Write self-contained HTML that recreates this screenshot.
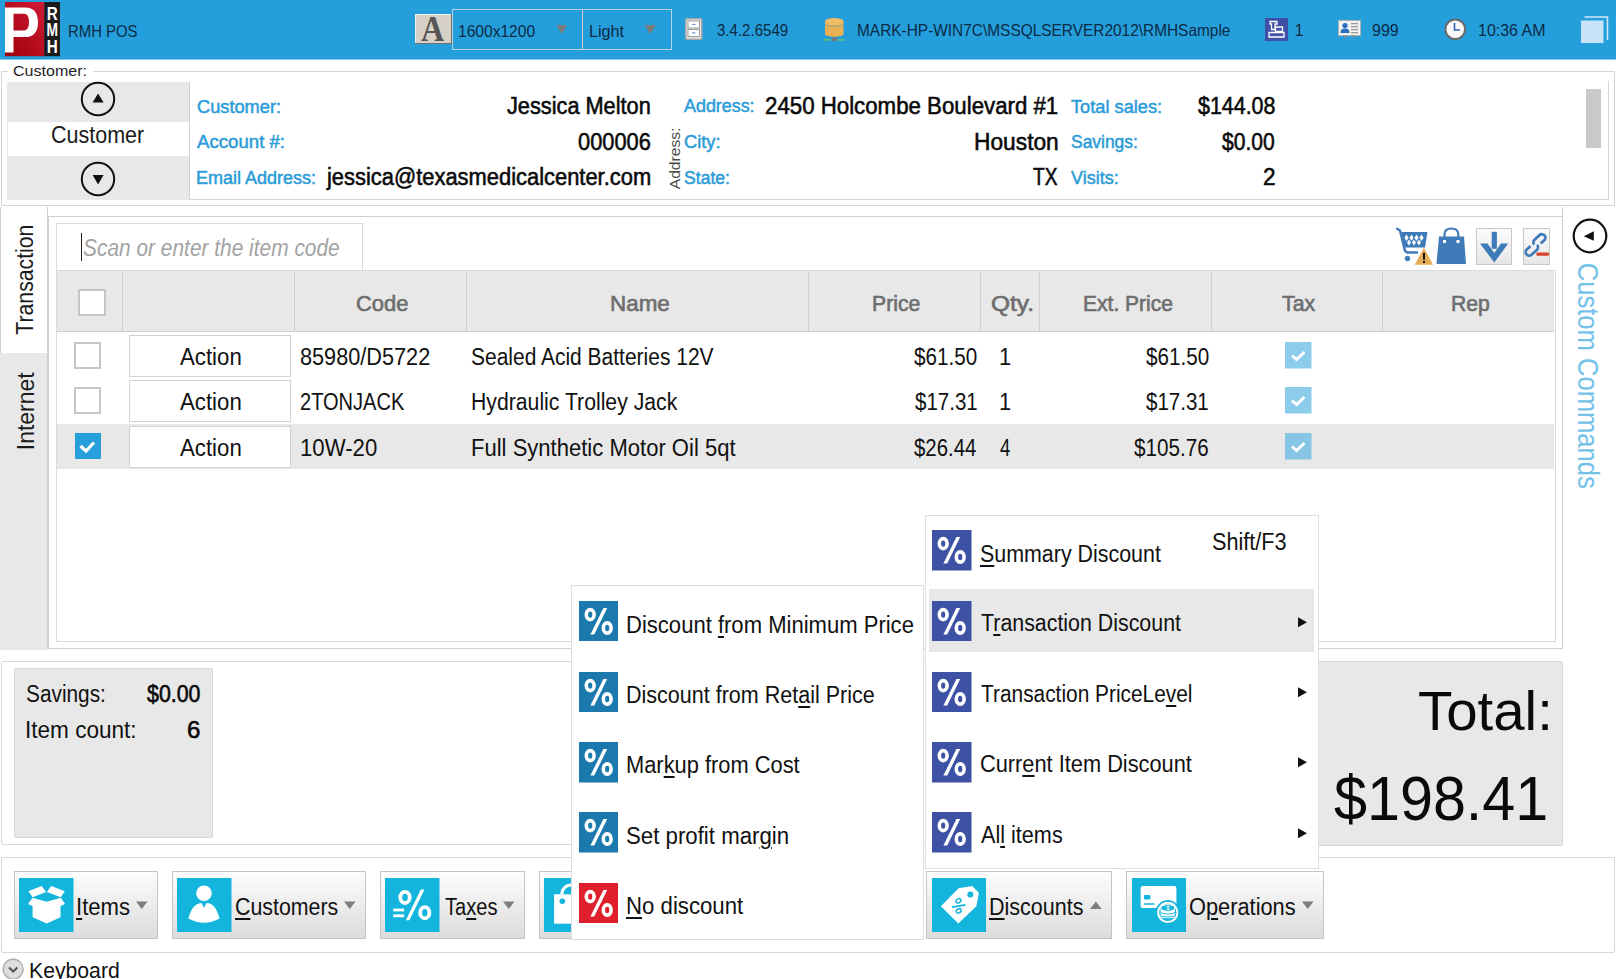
<!DOCTYPE html>
<html><head><meta charset="utf-8"><title>RMH POS</title>
<style>
html,body{margin:0;padding:0;width:1616px;height:979px;overflow:hidden;background:#fff;position:relative;font-family:'Liberation Sans', sans-serif;}
u{text-decoration:underline;text-decoration-thickness:1.6px;text-underline-offset:2.5px;}
</style></head><body>
<div style="position:absolute;left:0px;top:0px;width:1616px;height:59px;background:#259fdb"></div>
<div style="position:absolute;left:0px;top:59px;width:1616px;height:1px;background:#86c9ec"></div>
<svg style="position:absolute;left:5px;top:2px;" width="55" height="55" viewBox="0 0 55 55">
<defs><linearGradient id="lg" x1="1" y1="0" x2="0" y2="1"><stop offset="0" stop-color="#d21a36"/><stop offset="1" stop-color="#9c0008"/></linearGradient></defs>
<rect x="0" y="0" width="39.5" height="54.2" fill="url(#lg)"/>
<rect x="39.2" y="0" width="15.8" height="54.2" fill="#1c1c1c"/>
<path d="M0 5.4 H20 C29 5.4 33 10.5 33 20.7 C33 30.5 28 35.1 20 35.1 H8.5 V50.5 H0 Z M8.5 11.8 V28.4 H19 C22.5 28.4 24 25 24 20.1 C24 15 22.5 11.8 19 11.8 Z" fill="#fff" fill-rule="evenodd"/>
<text x="41.7" y="17.5" font-family="Liberation Sans" font-weight="700" font-size="18" fill="#fff" textLength="11" lengthAdjust="spacingAndGlyphs">R</text>
<text x="41.5" y="33.8" font-family="Liberation Sans" font-weight="700" font-size="18" fill="#fff" textLength="11.5" lengthAdjust="spacingAndGlyphs">M</text>
<text x="41.7" y="50.7" font-family="Liberation Sans" font-weight="700" font-size="18" fill="#fff" textLength="11" lengthAdjust="spacingAndGlyphs">H</text>
</svg>
<div style="position:absolute;top:22px;font-family:'Liberation Sans', sans-serif;font-size:16.5px;line-height:18px;font-weight:400;font-style:normal;color:#0c2a44;white-space:pre;transform-origin:0 0;left:67.60px;transform:scaleX(0.9013);">RMH POS</div>
<div style="position:absolute;left:415px;top:14.3px;width:36.5px;height:30px;background:#d6d0c6;box-shadow:inset -1px -1px 0 #6e6e6e, inset 1px 1px 0 #f4f2ee;"></div>
<svg style="position:absolute;left:415px;top:14px;" width="37" height="31" viewBox="0 0 37 31"><text x="6" y="26.6" font-family="Liberation Serif" font-weight="700" font-size="35" fill="#555" textLength="23.3" lengthAdjust="spacingAndGlyphs">A</text></svg>
<div style="position:absolute;left:452px;top:9px;width:218px;height:39px;border:1px solid #b9d3e2;box-sizing:content-box;"></div>
<div style="position:absolute;left:582px;top:10px;width:1px;height:39px;background:#d4cbc4"></div>
<div style="position:absolute;top:22px;font-family:'Liberation Sans', sans-serif;font-size:16.5px;line-height:18px;font-weight:400;font-style:normal;color:#0c2a44;white-space:pre;transform-origin:0 0;left:457.56px;transform:scaleX(0.9443);">1600x1200</div>
<svg style="position:absolute;left:556px;top:25px;" width="12" height="10" viewBox="0 0 12 10"><polygon points="0.5,0 11,0 5.75,9" fill="#7a7a7a"/></svg>
<div style="position:absolute;top:22px;font-family:'Liberation Sans', sans-serif;font-size:16.5px;line-height:18px;font-weight:400;font-style:normal;color:#0c2a44;white-space:pre;transform-origin:0 0;left:588.52px;transform:scaleX(0.9802);">Light</div>
<svg style="position:absolute;left:644px;top:25px;" width="13" height="10" viewBox="0 0 13 10"><polygon points="0.5,0 12,0 6.25,9" fill="#7a7a7a"/></svg>
<svg style="position:absolute;left:685px;top:18px;" width="18" height="22" viewBox="0 0 18 22"><rect x="0.75" y="0.75" width="16" height="20.5" rx="1.5" fill="#e6e6e6" stroke="#a8a8a8" stroke-width="1.5"/>
<rect x="3" y="3" width="11.5" height="7" fill="#fff" stroke="#888" stroke-width="0.8"/>
<rect x="3" y="11.5" width="11.5" height="7" fill="#fff" stroke="#888" stroke-width="0.8"/>
<path d="M6.5 6.8 Q8.75 4.8 11 6.8 Z" fill="#3a6fc0"/><path d="M6.5 15.3 Q8.75 13.3 11 15.3 Z" fill="#3a6fc0"/></svg>
<div style="position:absolute;top:21px;font-family:'Liberation Sans', sans-serif;font-size:16.5px;line-height:18px;font-weight:400;font-style:normal;color:#0c2a44;white-space:pre;transform-origin:0 0;left:717.00px;transform:scaleX(0.9125);">3.4.2.6549</div>
<svg style="position:absolute;left:824px;top:17px;" width="21" height="26" viewBox="0 0 21 26"><path d="M1 4.5 V16.8 C1 18.6 5 19.8 10.3 19.8 C15.6 19.8 19.5 18.6 19.5 16.8 V4.5 Z" fill="#eab054"/>
<ellipse cx="10.25" cy="4.5" rx="9.25" ry="3.4" fill="#f0bd66"/>
<path d="M1.2 7.6 C4 9.8 16.5 9.8 19.3 7.6" fill="none" stroke="#3a9ad0" stroke-width="0.9" opacity="0.6"/>
<rect x="7.8" y="20.5" width="5" height="3.5" fill="#7a7a7a"/><rect x="0" y="22" width="6.5" height="1.8" fill="#5cc07a"/><rect x="14" y="22" width="6.5" height="1.8" fill="#5cc07a"/></svg>
<div style="position:absolute;top:21px;font-family:'Liberation Sans', sans-serif;font-size:16.5px;line-height:18px;font-weight:400;font-style:normal;color:#0c2a44;white-space:pre;transform-origin:0 0;left:856.67px;transform:scaleX(0.9348);">MARK-HP-WIN7C\MSSQLSERVER2012\RMHSample</div>
<svg style="position:absolute;left:1265px;top:18px;" width="23" height="23" viewBox="0 0 23 23"><rect width="23" height="23" fill="#3f50a6"/>
<path d="M5 3.5 H12 V6 H10 V11.5 H6.5 V6 H5 Z M10.5 9 H17.5 V13.5 H10.5 Z M4 14.5 H19 V19 H4 Z" fill="none" stroke="#fff" stroke-width="1.3"/></svg>
<div style="position:absolute;top:21px;font-family:'Liberation Sans', sans-serif;font-size:16.5px;line-height:18px;font-weight:400;font-style:normal;color:#0c2a44;white-space:pre;transform-origin:0 0;left:1294.50px;">1</div>
<svg style="position:absolute;left:1338px;top:20px;" width="23" height="19" viewBox="0 0 23 19"><rect x="0.5" y="0.5" width="22" height="15" fill="#f2f2f2" stroke="#b0b0b0"/>
<circle cx="7" cy="5.5" r="2.6" fill="#2c6cc0"/><path d="M2.5 13 C2.5 9.5 4.5 8.5 7 8.5 C9.5 8.5 11.5 9.5 11.5 13 Z" fill="#2c6cc0"/>
<rect x="13" y="3" width="7" height="1.3" fill="#9a9a9a"/><rect x="13" y="6" width="7" height="1.3" fill="#9a9a9a"/><rect x="13" y="9" width="7" height="1.3" fill="#9a9a9a"/><rect x="13" y="12" width="7" height="1.3" fill="#9a9a9a"/>
<path d="M5 15.5 L7 18.5 L9 15.5 Z M14 15.5 L16 18.5 L18 15.5 Z" fill="#8a8a8a"/></svg>
<div style="position:absolute;top:21px;font-family:'Liberation Sans', sans-serif;font-size:16.5px;line-height:18px;font-weight:400;font-style:normal;color:#0c2a44;white-space:pre;transform-origin:0 0;left:1372.00px;transform:scaleX(0.9688);">999</div>
<svg style="position:absolute;left:1444px;top:18px;" width="23" height="23" viewBox="0 0 23 23"><circle cx="11.25" cy="11.25" r="9.8" fill="#fafafa" stroke="#6a6a6a" stroke-width="2"/>
<path d="M10.5 5 V12 H16" fill="none" stroke="#2c62b8" stroke-width="1.6"/></svg>
<div style="position:absolute;top:21px;font-family:'Liberation Sans', sans-serif;font-size:16.5px;line-height:18px;font-weight:400;font-style:normal;color:#0c2a44;white-space:pre;transform-origin:0 0;left:1478.03px;transform:scaleX(0.9684);">10:36 AM</div>
<svg style="position:absolute;left:1580px;top:16px;" width="30" height="28" viewBox="0 0 30 28"><path d="M4.5 1 H27.5 V24" fill="none" stroke="#cfe8fa" stroke-width="1.5"/>
<rect x="1" y="4.5" width="22.5" height="22.5" fill="#c6e3f8"/></svg>
<div style="position:absolute;left:1px;top:71px;width:1614px;height:135px;border:1px solid #d6d6d6;box-sizing:border-box;"></div>
<div style="position:absolute;left:8px;top:66px;width:85px;height:10px;background:#fff"></div>
<div style="position:absolute;top:63px;font-family:'Liberation Sans', sans-serif;font-size:14px;line-height:16px;font-weight:400;font-style:normal;color:#1e1e1e;white-space:pre;transform-origin:0 0;left:12.70px;transform:scaleX(1.1463);">Customer:</div>
<div style="position:absolute;left:1608px;top:81px;width:1px;height:119px;background:#d6d6d6"></div>
<div style="position:absolute;left:7px;top:199px;width:1602px;height:1px;background:#d6d6d6"></div>
<div style="position:absolute;left:7px;top:82px;width:182px;height:118px;background:#e8e8e8"></div>
<div style="position:absolute;left:189px;top:82px;width:1px;height:118px;background:#d2d2d2"></div>
<div style="position:absolute;left:8px;top:122px;width:181px;height:34px;background:#fff"></div>
<svg style="position:absolute;left:80px;top:81px;" width="36" height="36" viewBox="0 0 36 36"><circle cx="18" cy="18" r="16.2" fill="none" stroke="#111" stroke-width="2"/><polygon points="12.6,21.5 23.6,21.5 18.1,12.5" fill="#111"/></svg>
<svg style="position:absolute;left:80px;top:160.5px;" width="36" height="36" viewBox="0 0 36 36"><circle cx="18" cy="18" r="16.2" fill="none" stroke="#111" stroke-width="2"/><polygon points="12.6,13.9 23.6,13.9 18.1,23.4" fill="#111"/></svg>
<div style="position:absolute;top:122px;font-family:'Liberation Sans', sans-serif;font-size:23px;line-height:26px;font-weight:400;font-style:normal;color:#1a1a1a;white-space:pre;transform-origin:0 0;left:50.76px;transform:scaleX(0.9350);">Customer</div>
<div style="position:absolute;top:97px;font-family:'Liberation Sans', sans-serif;font-size:18px;line-height:20px;font-weight:400;font-style:normal;color:#2b9cd8;white-space:pre;transform-origin:0 0;left:197.00px;transform:scaleX(1.0119);-webkit-text-stroke:0.5px #2b9cd8;">Customer:</div>
<div style="position:absolute;top:132px;font-family:'Liberation Sans', sans-serif;font-size:18px;line-height:20px;font-weight:400;font-style:normal;color:#2b9cd8;white-space:pre;transform-origin:0 0;left:197.00px;transform:scaleX(1.0351);-webkit-text-stroke:0.5px #2b9cd8;">Account #:</div>
<div style="position:absolute;top:168px;font-family:'Liberation Sans', sans-serif;font-size:18px;line-height:20px;font-weight:400;font-style:normal;color:#2b9cd8;white-space:pre;transform-origin:0 0;left:196.00px;-webkit-text-stroke:0.5px #2b9cd8;">Email Address:</div>
<div style="position:absolute;top:93px;font-family:'Liberation Sans', sans-serif;font-size:23px;line-height:26px;font-weight:400;font-style:normal;color:#0a0a0a;white-space:pre;transform-origin:0 0;left:507.00px;transform:scaleX(0.9450);-webkit-text-stroke:0.55px #0a0a0a;">Jessica Melton</div>
<div style="position:absolute;top:129px;font-family:'Liberation Sans', sans-serif;font-size:23px;line-height:26px;font-weight:400;font-style:normal;color:#0a0a0a;white-space:pre;transform-origin:0 0;left:578.00px;transform:scaleX(0.9479);-webkit-text-stroke:0.55px #0a0a0a;">000006</div>
<div style="position:absolute;top:164px;font-family:'Liberation Sans', sans-serif;font-size:23px;line-height:26px;font-weight:400;font-style:normal;color:#0a0a0a;white-space:pre;transform-origin:0 0;left:326.95px;transform:scaleX(0.9523);-webkit-text-stroke:0.55px #0a0a0a;">jessica@texasmedicalcenter.com</div>
<div style="position:absolute;top:146px;font-family:'Liberation Sans', sans-serif;font-size:14.5px;line-height:16px;font-weight:400;font-style:normal;color:#4a4a4a;white-space:pre;transform-origin:0 0;left:674.5px;top:159.2px;transform:rotate(-90deg) translate(-30.25px,-7.81px) scaleX(1.0767);">Address:</div>
<div style="position:absolute;top:96px;font-family:'Liberation Sans', sans-serif;font-size:18px;line-height:20px;font-weight:400;font-style:normal;color:#2b9cd8;white-space:pre;transform-origin:0 0;left:684.00px;transform:scaleX(0.9938);-webkit-text-stroke:0.5px #2b9cd8;">Address:</div>
<div style="position:absolute;top:132px;font-family:'Liberation Sans', sans-serif;font-size:18px;line-height:20px;font-weight:400;font-style:normal;color:#2b9cd8;white-space:pre;transform-origin:0 0;left:684.00px;transform:scaleX(1.0143);-webkit-text-stroke:0.5px #2b9cd8;">City:</div>
<div style="position:absolute;top:168px;font-family:'Liberation Sans', sans-serif;font-size:18px;line-height:20px;font-weight:400;font-style:normal;color:#2b9cd8;white-space:pre;transform-origin:0 0;left:684.00px;transform:scaleX(0.9776);-webkit-text-stroke:0.5px #2b9cd8;">State:</div>
<div style="position:absolute;top:93px;font-family:'Liberation Sans', sans-serif;font-size:23px;line-height:26px;font-weight:400;font-style:normal;color:#0a0a0a;white-space:pre;transform-origin:0 0;left:765.03px;transform:scaleX(0.9677);-webkit-text-stroke:0.55px #0a0a0a;">2450 Holcombe Boulevard #1</div>
<div style="position:absolute;top:129px;font-family:'Liberation Sans', sans-serif;font-size:23px;line-height:26px;font-weight:400;font-style:normal;color:#0a0a0a;white-space:pre;transform-origin:0 0;left:973.51px;transform:scaleX(0.9896);-webkit-text-stroke:0.55px #0a0a0a;">Houston</div>
<div style="position:absolute;top:164px;font-family:'Liberation Sans', sans-serif;font-size:23px;line-height:26px;font-weight:400;font-style:normal;color:#0a0a0a;white-space:pre;transform-origin:0 0;left:1033.40px;transform:scaleX(0.8296);-webkit-text-stroke:0.55px #0a0a0a;">TX</div>
<div style="position:absolute;top:97px;font-family:'Liberation Sans', sans-serif;font-size:18px;line-height:20px;font-weight:400;font-style:normal;color:#2b9cd8;white-space:pre;transform-origin:0 0;left:1070.50px;transform:scaleX(1.0119);-webkit-text-stroke:0.5px #2b9cd8;">Total sales:</div>
<div style="position:absolute;top:132px;font-family:'Liberation Sans', sans-serif;font-size:18px;line-height:20px;font-weight:400;font-style:normal;color:#2b9cd8;white-space:pre;transform-origin:0 0;left:1070.50px;transform:scaleX(0.9686);-webkit-text-stroke:0.5px #2b9cd8;">Savings:</div>
<div style="position:absolute;top:168px;font-family:'Liberation Sans', sans-serif;font-size:18px;line-height:20px;font-weight:400;font-style:normal;color:#2b9cd8;white-space:pre;transform-origin:0 0;left:1070.50px;transform:scaleX(1.0026);-webkit-text-stroke:0.5px #2b9cd8;">Visits:</div>
<div style="position:absolute;top:93px;font-family:'Liberation Sans', sans-serif;font-size:23px;line-height:26px;font-weight:400;font-style:normal;color:#0a0a0a;white-space:pre;transform-origin:0 0;left:1197.70px;transform:scaleX(0.9314);-webkit-text-stroke:0.55px #0a0a0a;">$144.08</div>
<div style="position:absolute;top:129px;font-family:'Liberation Sans', sans-serif;font-size:23px;line-height:26px;font-weight:400;font-style:normal;color:#0a0a0a;white-space:pre;transform-origin:0 0;left:1222.40px;transform:scaleX(0.9161);-webkit-text-stroke:0.55px #0a0a0a;">$0.00</div>
<div style="position:absolute;top:164px;font-family:'Liberation Sans', sans-serif;font-size:23px;line-height:26px;font-weight:400;font-style:normal;color:#0a0a0a;white-space:pre;transform-origin:0 0;left:1262.62px;transform:scaleX(0.9818);-webkit-text-stroke:0.55px #0a0a0a;">2</div>
<div style="position:absolute;left:1586px;top:88.6px;width:15.3px;height:59.7px;background:#c9c9c9"></div>
<div style="position:absolute;left:0px;top:207px;width:47px;height:146px;background:#fff"></div>
<div style="position:absolute;left:0px;top:207px;width:1px;height:146px;background:#d0d0d0"></div>
<div style="position:absolute;left:0px;top:353px;width:47px;height:297px;background:#e8e8e8"></div>
<div style="position:absolute;left:47px;top:207px;width:1px;height:442px;background:#d0d0d0"></div>
<div style="position:absolute;top:259px;font-family:'Liberation Sans', sans-serif;font-size:23px;line-height:26px;font-weight:400;font-style:normal;color:#1a1a1a;white-space:pre;transform-origin:0 0;left:24.8px;top:280.3px;transform:rotate(-90deg) translate(-54.70px,-12.77px) scaleX(0.9230);">Transaction</div>
<div style="position:absolute;top:389px;font-family:'Liberation Sans', sans-serif;font-size:23px;line-height:26px;font-weight:400;font-style:normal;color:#1a1a1a;white-space:pre;transform-origin:0 0;left:25.8px;top:409.8px;transform:rotate(-90deg) translate(-40.14px,-12.77px) scaleX(0.9960);">Internet</div>
<div style="position:absolute;left:48px;top:216px;width:1515px;height:433px;border:1px solid #d0d0d0;border-right:none;box-sizing:border-box;"></div>
<div style="position:absolute;left:1562px;top:207px;width:1px;height:442px;background:#d0d0d0"></div>
<div style="position:absolute;left:56px;top:270px;width:1500px;height:372px;border:1px solid #dadada;box-sizing:border-box;"></div>
<div style="position:absolute;left:56px;top:223px;width:307px;height:48px;border:1px solid #dadada;box-sizing:border-box;background:#fff"></div>
<div style="position:absolute;left:81px;top:232.5px;width:1.3px;height:28.5px;background:#222"></div>
<div style="position:absolute;top:235px;font-family:'Liberation Sans', sans-serif;font-size:23px;line-height:26px;font-weight:400;font-style:italic;color:#a3a3a3;white-space:pre;transform-origin:0 0;left:82.50px;transform:scaleX(0.9086);">Scan or enter the item code</div>
<div style="position:absolute;left:57px;top:271px;width:1497px;height:60px;background:#e8e8e8"></div>
<div style="position:absolute;left:57px;top:331px;width:1497px;height:1px;background:#d0d0d0"></div>
<div style="position:absolute;left:122px;top:271px;width:1px;height:60px;background:#d0d0d0"></div>
<div style="position:absolute;left:294px;top:271px;width:1px;height:60px;background:#d0d0d0"></div>
<div style="position:absolute;left:466px;top:271px;width:1px;height:60px;background:#d0d0d0"></div>
<div style="position:absolute;left:808px;top:271px;width:1px;height:60px;background:#d0d0d0"></div>
<div style="position:absolute;left:980px;top:271px;width:1px;height:60px;background:#d0d0d0"></div>
<div style="position:absolute;left:1039px;top:271px;width:1px;height:60px;background:#d0d0d0"></div>
<div style="position:absolute;left:1211px;top:271px;width:1px;height:60px;background:#d0d0d0"></div>
<div style="position:absolute;left:1382px;top:271px;width:1px;height:60px;background:#d0d0d0"></div>
<div style="position:absolute;left:77.5px;top:289px;width:28px;height:27px;border:2px solid #c6c6c6;box-sizing:border-box;background:#fff"></div>
<div style="position:absolute;top:291px;font-family:'Liberation Sans', sans-serif;font-size:22.5px;line-height:25px;font-weight:400;font-style:normal;color:#6e6e6e;white-space:pre;transform-origin:0 0;left:356.02px;transform:scaleX(0.9756);-webkit-text-stroke:0.65px #6e6e6e;">Code</div>
<div style="position:absolute;top:291px;font-family:'Liberation Sans', sans-serif;font-size:22.5px;line-height:25px;font-weight:400;font-style:normal;color:#6e6e6e;white-space:pre;transform-origin:0 0;left:609.65px;transform:scaleX(0.9965);-webkit-text-stroke:0.65px #6e6e6e;">Name</div>
<div style="position:absolute;top:291px;font-family:'Liberation Sans', sans-serif;font-size:22.5px;line-height:25px;font-weight:400;font-style:normal;color:#6e6e6e;white-space:pre;transform-origin:0 0;left:872.41px;transform:scaleX(0.9427);-webkit-text-stroke:0.65px #6e6e6e;">Price</div>
<div style="position:absolute;top:291px;font-family:'Liberation Sans', sans-serif;font-size:22.5px;line-height:25px;font-weight:400;font-style:normal;color:#6e6e6e;white-space:pre;transform-origin:0 0;left:990.87px;transform:scaleX(1.0848);-webkit-text-stroke:0.65px #6e6e6e;">Qty.</div>
<div style="position:absolute;top:291px;font-family:'Liberation Sans', sans-serif;font-size:22.5px;line-height:25px;font-weight:400;font-style:normal;color:#6e6e6e;white-space:pre;transform-origin:0 0;left:1082.77px;transform:scaleX(0.9350);-webkit-text-stroke:0.65px #6e6e6e;">Ext. Price</div>
<div style="position:absolute;top:291px;font-family:'Liberation Sans', sans-serif;font-size:22.5px;line-height:25px;font-weight:400;font-style:normal;color:#6e6e6e;white-space:pre;transform-origin:0 0;left:1282.45px;transform:scaleX(0.9479);-webkit-text-stroke:0.65px #6e6e6e;">Tax</div>
<div style="position:absolute;top:291px;font-family:'Liberation Sans', sans-serif;font-size:22.5px;line-height:25px;font-weight:400;font-style:normal;color:#6e6e6e;white-space:pre;transform-origin:0 0;left:1451.26px;transform:scaleX(0.9406);-webkit-text-stroke:0.65px #6e6e6e;">Rep</div>
<div style="position:absolute;left:57px;top:423.7px;width:1497px;height:45.2px;background:#e8e8e8"></div>
<div style="position:absolute;left:74px;top:341.7px;width:27px;height:27px;border:2px solid #c6c6c6;box-sizing:border-box;background:#fff"></div>
<div style="position:absolute;left:129.3px;top:334.5px;width:161.5px;height:42px;border:1px solid #d2d2d2;box-sizing:border-box;background:#fff"></div>
<div style="position:absolute;top:344px;font-family:'Liberation Sans', sans-serif;font-size:23px;line-height:26px;font-weight:400;font-style:normal;color:#111;white-space:pre;transform-origin:0 0;left:179.50px;transform:scaleX(0.9662);">Action</div>
<div style="position:absolute;top:344px;font-family:'Liberation Sans', sans-serif;font-size:23px;line-height:26px;font-weight:400;font-style:normal;color:#111;white-space:pre;transform-origin:0 0;left:299.76px;transform:scaleX(0.9426);">85980/D5722</div>
<div style="position:absolute;top:344px;font-family:'Liberation Sans', sans-serif;font-size:23px;line-height:26px;font-weight:400;font-style:normal;color:#111;white-space:pre;transform-origin:0 0;left:471.09px;transform:scaleX(0.9120);">Sealed Acid Batteries 12V</div>
<div style="position:absolute;top:344px;font-family:'Liberation Sans', sans-serif;font-size:23px;line-height:26px;font-weight:400;font-style:normal;color:#111;white-space:pre;transform-origin:0 0;left:914.00px;transform:scaleX(0.8986);">$61.50</div>
<div style="position:absolute;top:344px;font-family:'Liberation Sans', sans-serif;font-size:23px;line-height:26px;font-weight:400;font-style:normal;color:#111;white-space:pre;transform-origin:0 0;left:998.85px;transform:scaleX(0.9545);">1</div>
<div style="position:absolute;top:344px;font-family:'Liberation Sans', sans-serif;font-size:23px;line-height:26px;font-weight:400;font-style:normal;color:#111;white-space:pre;transform-origin:0 0;left:1145.50px;transform:scaleX(0.8986);">$61.50</div>
<svg style="position:absolute;left:1285px;top:342.2px;" width="27" height="27" viewBox="0 0 27 27"><rect width="26.5" height="26.5" fill="#8dcdec"/><path d="M7 13.5 L11.5 17.5 L19.5 10" fill="none" stroke="#fff" stroke-width="3"/></svg>
<div style="position:absolute;left:74px;top:387.2px;width:27px;height:27px;border:2px solid #c6c6c6;box-sizing:border-box;background:#fff"></div>
<div style="position:absolute;left:129.3px;top:380.3px;width:161.5px;height:42px;border:1px solid #d2d2d2;box-sizing:border-box;background:#fff"></div>
<div style="position:absolute;top:389px;font-family:'Liberation Sans', sans-serif;font-size:23px;line-height:26px;font-weight:400;font-style:normal;color:#111;white-space:pre;transform-origin:0 0;left:179.50px;transform:scaleX(0.9662);">Action</div>
<div style="position:absolute;top:389px;font-family:'Liberation Sans', sans-serif;font-size:23px;line-height:26px;font-weight:400;font-style:normal;color:#111;white-space:pre;transform-origin:0 0;left:299.83px;transform:scaleX(0.8712);">2TONJACK</div>
<div style="position:absolute;top:389px;font-family:'Liberation Sans', sans-serif;font-size:23px;line-height:26px;font-weight:400;font-style:normal;color:#111;white-space:pre;transform-origin:0 0;left:471.08px;transform:scaleX(0.9222);">Hydraulic Trolley Jack</div>
<div style="position:absolute;top:389px;font-family:'Liberation Sans', sans-serif;font-size:23px;line-height:26px;font-weight:400;font-style:normal;color:#111;white-space:pre;transform-origin:0 0;left:914.50px;transform:scaleX(0.8914);">$17.31</div>
<div style="position:absolute;top:389px;font-family:'Liberation Sans', sans-serif;font-size:23px;line-height:26px;font-weight:400;font-style:normal;color:#111;white-space:pre;transform-origin:0 0;left:998.85px;transform:scaleX(0.9545);">1</div>
<div style="position:absolute;top:389px;font-family:'Liberation Sans', sans-serif;font-size:23px;line-height:26px;font-weight:400;font-style:normal;color:#111;white-space:pre;transform-origin:0 0;left:1146.00px;transform:scaleX(0.8914);">$17.31</div>
<svg style="position:absolute;left:1285px;top:387.1px;" width="27" height="27" viewBox="0 0 27 27"><rect width="26.5" height="26.5" fill="#8dcdec"/><path d="M7 13.5 L11.5 17.5 L19.5 10" fill="none" stroke="#fff" stroke-width="3"/></svg>
<svg style="position:absolute;left:74.5px;top:433.0px;" width="26" height="26" viewBox="0 0 26 26"><rect width="26" height="26" fill="#279fda"/><path d="M5.5 13 L11 18 L19 9.5" fill="none" stroke="#fff" stroke-width="3.2"/></svg>
<div style="position:absolute;left:129.3px;top:425.5px;width:161.5px;height:42px;border:1px solid #d2d2d2;box-sizing:border-box;background:#fff"></div>
<div style="position:absolute;top:435px;font-family:'Liberation Sans', sans-serif;font-size:23px;line-height:26px;font-weight:400;font-style:normal;color:#111;white-space:pre;transform-origin:0 0;left:179.50px;transform:scaleX(0.9662);">Action</div>
<div style="position:absolute;top:435px;font-family:'Liberation Sans', sans-serif;font-size:23px;line-height:26px;font-weight:400;font-style:normal;color:#111;white-space:pre;transform-origin:0 0;left:299.74px;transform:scaleX(0.9639);">10W-20</div>
<div style="position:absolute;top:435px;font-family:'Liberation Sans', sans-serif;font-size:23px;line-height:26px;font-weight:400;font-style:normal;color:#111;white-space:pre;transform-origin:0 0;left:471.04px;transform:scaleX(0.9582);">Full Synthetic Motor Oil 5qt</div>
<div style="position:absolute;top:435px;font-family:'Liberation Sans', sans-serif;font-size:23px;line-height:26px;font-weight:400;font-style:normal;color:#111;white-space:pre;transform-origin:0 0;left:914.00px;transform:scaleX(0.8858);">$26.44</div>
<div style="position:absolute;top:435px;font-family:'Liberation Sans', sans-serif;font-size:23px;line-height:26px;font-weight:400;font-style:normal;color:#111;white-space:pre;transform-origin:0 0;left:999.80px;transform:scaleX(0.8077);">4</div>
<div style="position:absolute;top:435px;font-family:'Liberation Sans', sans-serif;font-size:23px;line-height:26px;font-weight:400;font-style:normal;color:#111;white-space:pre;transform-origin:0 0;left:1134.00px;transform:scaleX(0.8986);">$105.76</div>
<svg style="position:absolute;left:1285px;top:432.9px;" width="27" height="27" viewBox="0 0 27 27"><rect width="26.5" height="26.5" fill="#86c6e4"/><path d="M7 13.5 L11.5 17.5 L19.5 10" fill="none" stroke="#fff" stroke-width="3"/></svg>
<svg style="position:absolute;left:1396px;top:227px;" width="39" height="39" viewBox="0 0 39 39"><g fill="none" stroke="#3f7bb8" stroke-width="2.4" stroke-linecap="round" stroke-linejoin="round">
<path d="M1 1.8 L4 3.5 L8.5 22 C9 24.5 10 25.5 12 25.5 H21"/></g>
<polygon points="5.3,5 31.5,5 29,20.5 8.5,20.5" fill="#3f7bb8"/>
<g fill="#fff"><polygon points="10.5,7.5 12.5,10.8 10.5,14 8.5,10.8"/><polygon points="15.5,7.5 17.5,10.8 15.5,14 13.5,10.8"/><polygon points="20.5,7.5 22.5,10.8 20.5,14 18.5,10.8"/><polygon points="25.5,7.5 27.5,10.8 25.5,14 23.5,10.8"/>
<polygon points="13,12.5 15,15.5 13,18.5 11,15.5"/><polygon points="18,12.5 20,15.5 18,18.5 16,15.5"/><polygon points="23,12.5 25,15.5 23,18.5 21,15.5"/></g>
<circle cx="11.5" cy="31.5" r="2.7" fill="#3f7bb8"/>
<polygon points="18.7,37.8 27.9,20.7 37.1,37.8" fill="#e8ab56"/><rect x="27" y="25.8" width="2" height="6.8" fill="#111"/><rect x="27" y="34" width="2" height="2" fill="#111"/></svg>
<svg style="position:absolute;left:1436px;top:227px;" width="31" height="38" viewBox="0 0 31 38"><path d="M8.5 10 V7.5 C8.5 3.5 11.5 1.5 15.4 1.5 C19.3 1.5 22.3 3.5 22.3 7.5 V10" fill="none" stroke="#3f7bb8" stroke-width="2.2"/>
<polygon points="3,9.5 28,9.5 30,37 0.5,37" fill="#3f7bb8"/><rect x="7" y="13" width="3" height="3" fill="#fff"/><rect x="20.5" y="13" width="3" height="3" fill="#fff"/></svg>
<div style="position:absolute;left:1476px;top:228px;width:36px;height:37px;border:1px solid #c8c8c8;box-sizing:border-box;background:linear-gradient(#fbfbfb,#e6e6e6)"></div>
<svg style="position:absolute;left:1476px;top:228px;" width="36" height="37" viewBox="0 0 36 37"><rect x="15.7" y="3.8" width="5.2" height="17" fill="#3f7bb8"/><polygon points="4,15.5 11.5,15.5 18.3,25 25,15.5 32.2,15.5 18.3,34.5" fill="#3f7bb8"/></svg>
<div style="position:absolute;left:1523px;top:228px;width:27px;height:37px;border:1px solid #c8c8c8;box-sizing:border-box;background:linear-gradient(#fbfbfb,#e6e6e6)"></div>
<svg style="position:absolute;left:1523px;top:228px;" width="27" height="37" viewBox="0 0 27 37"><g fill="none" stroke-width="2.7" stroke="#3f7bb8">
<path d="M-1.5 3.5 H3.4 A3.5 3.5 0 0 0 3.4 -3.5 H-3.4 A3.5 3.5 0 0 0 -6.9 0" transform="translate(16.4 12) rotate(-42)"/>
<path d="M1.5 -3.5 H-3.6 A3.5 3.5 0 0 0 -3.6 3.5 H3.6 A3.5 3.5 0 0 0 7.1 0" transform="translate(8.8 21.7) rotate(-42)"/></g>
<rect x="13.4" y="24.6" width="12.6" height="3.2" rx="1" fill="#d8432a"/></svg>
<svg style="position:absolute;left:1572px;top:218px;" width="36" height="36" viewBox="0 0 36 36"><circle cx="18" cy="18" r="16.3" fill="none" stroke="#111" stroke-width="2.2"/><polygon points="11.8,18.2 21.8,13.2 21.8,22.8" fill="#111"/></svg>
<div style="position:absolute;top:350px;font-family:'Liberation Sans', sans-serif;font-size:29px;line-height:32px;font-weight:400;font-style:normal;color:#74c2ea;white-space:pre;transform-origin:0 0;left:1588.3px;top:376.4px;transform:rotate(90deg) translate(-113.28px,-15.62px) scaleX(0.8825);">Custom Commands</div>
<div style="position:absolute;left:1px;top:661px;width:1331px;height:184px;border:1px solid #d8d8d8;box-sizing:border-box;border-radius:2px;"></div>
<div style="position:absolute;left:14px;top:668px;width:198.5px;height:170px;background:#e8e8e8;border:1px solid #d6d6d6;box-sizing:border-box;border-radius:2px;"></div>
<div style="position:absolute;top:681px;font-family:'Liberation Sans', sans-serif;font-size:23px;line-height:26px;font-weight:400;font-style:normal;color:#111;white-space:pre;transform-origin:0 0;left:25.59px;transform:scaleX(0.9053);">Savings:</div>
<div style="position:absolute;top:681px;font-family:'Liberation Sans', sans-serif;font-size:23px;line-height:26px;font-weight:400;font-style:normal;color:#0a0a0a;white-space:pre;transform-origin:0 0;left:147.10px;transform:scaleX(0.9284);-webkit-text-stroke:0.6px #0a0a0a;">$0.00</div>
<div style="position:absolute;top:717px;font-family:'Liberation Sans', sans-serif;font-size:23px;line-height:26px;font-weight:400;font-style:normal;color:#111;white-space:pre;transform-origin:0 0;left:24.54px;transform:scaleX(0.9811);">Item count:</div>
<div style="position:absolute;top:717px;font-family:'Liberation Sans', sans-serif;font-size:23px;line-height:26px;font-weight:400;font-style:normal;color:#0a0a0a;white-space:pre;transform-origin:0 0;left:187.25px;transform:scaleX(1.0455);-webkit-text-stroke:0.6px #0a0a0a;">6</div>
<div style="position:absolute;left:1300px;top:661px;width:262.5px;height:184.5px;background:#e8e8e8;border:1px solid #d6d6d6;box-sizing:border-box;border-radius:2px;"></div>
<div style="position:absolute;top:680px;font-family:'Liberation Sans', sans-serif;font-size:55px;line-height:62px;font-weight:400;font-style:normal;color:#0a0a0a;white-space:pre;transform-origin:0 0;left:1418.37px;transform:scaleX(1.0255);">Total:</div>
<div style="position:absolute;top:763px;font-family:'Liberation Sans', sans-serif;font-size:63.5px;line-height:70px;font-weight:400;font-style:normal;color:#0a0a0a;white-space:pre;transform-origin:0 0;left:1334.30px;transform:scaleX(0.9335);">$198.41</div>
<div style="position:absolute;left:1px;top:857px;width:1614px;height:95.5px;border:1px solid #d8d8d8;box-sizing:border-box;border-radius:2px;"></div>
<div style="position:absolute;left:14.1px;top:871.2px;width:144.20000000000002px;height:67.4px;border:1px solid #c4c4c4;box-sizing:border-box;background:linear-gradient(#fdfdfd,#f0f0f0 40%,#dcdcdc);"></div>
<svg style="position:absolute;left:19.3px;top:877.7px;" width="54.5" height="54.6" viewBox="0 0 54.5 54.6"><rect width="54.5" height="54.6" fill="#13b5dc"/><g fill="#fff"><polygon points="9.3,13.3 22.6,8 27.2,14 13.6,19.3"/><polygon points="32.2,8 45.8,13.3 41.8,19.3 27.9,14"/>
<polygon points="13.6,19.8 27.5,23.8 41.8,19.8 46.1,26 41.5,28 41.5,39.2 27.7,45.5 13.6,39.2 13.6,28 9,26"/></g></svg>
<div style="position:absolute;top:894px;font-family:'Liberation Sans', sans-serif;font-size:23px;line-height:26px;font-weight:400;font-style:normal;color:#111;white-space:pre;transform-origin:0 0;left:75.68px;transform:scaleX(0.9622);"><u>I</u>tems</div>
<svg style="position:absolute;left:136px;top:901px;" width="12" height="9" viewBox="0 0 12 9"><polygon points="0,0.5 11.5,0.5 5.75,8" fill="#7e7e7e"/></svg>
<div style="position:absolute;left:172.1px;top:871.2px;width:194.29999999999998px;height:67.4px;border:1px solid #c4c4c4;box-sizing:border-box;background:linear-gradient(#fdfdfd,#f0f0f0 40%,#dcdcdc);"></div>
<svg style="position:absolute;left:177.29999999999998px;top:877.7px;" width="54.5" height="54.6" viewBox="0 0 54.5 54.6"><rect width="54.5" height="54.6" fill="#13b5dc"/><circle cx="27" cy="15.3" r="7.8" fill="#fff"/><path d="M22.7 25.2 C16.5 26.5 13.5 33 11.4 40.5 Q27 49 42.6 40.5 C40.5 33 37.5 26.5 32 25.2 L29.3 25.2 L27 29.9 L24.7 25.2 Z" fill="#fff"/></svg>
<div style="position:absolute;top:894px;font-family:'Liberation Sans', sans-serif;font-size:23px;line-height:26px;font-weight:400;font-style:normal;color:#111;white-space:pre;transform-origin:0 0;left:234.67px;transform:scaleX(0.9280);"><u>C</u>ustomers</div>
<svg style="position:absolute;left:343.5px;top:901px;" width="12" height="9" viewBox="0 0 12 9"><polygon points="0,0.5 11.5,0.5 5.75,8" fill="#7e7e7e"/></svg>
<div style="position:absolute;left:380.2px;top:871.2px;width:144.50000000000006px;height:67.4px;border:1px solid #c4c4c4;box-sizing:border-box;background:linear-gradient(#fdfdfd,#f0f0f0 40%,#dcdcdc);"></div>
<svg style="position:absolute;left:385.4px;top:877.7px;" width="54.5" height="54.6" viewBox="0 0 54.5 54.6"><rect width="54.5" height="54.6" fill="#13b5dc"/><g fill="none" stroke="#fff" stroke-width="3.8"><ellipse cx="20" cy="19.4" rx="4.7" ry="5.6"/><ellipse cx="39.8" cy="34.7" rx="4.6" ry="5.6"/></g>
<polygon points="35.8,11.6 39.5,11.6 24.4,42.2 20.8,42.2" fill="#fff"/><rect x="8.2" y="30.6" width="11" height="2.8" fill="#fff"/><rect x="8.2" y="36.4" width="11" height="2.8" fill="#fff"/></svg>
<div style="position:absolute;top:894px;font-family:'Liberation Sans', sans-serif;font-size:23px;line-height:26px;font-weight:400;font-style:normal;color:#111;white-space:pre;transform-origin:0 0;left:444.50px;transform:scaleX(0.8727);">Ta<u>x</u>es</div>
<svg style="position:absolute;left:502.5px;top:901px;" width="12" height="9" viewBox="0 0 12 9"><polygon points="0,0.5 11.5,0.5 5.75,8" fill="#7e7e7e"/></svg>
<div style="position:absolute;left:539.2px;top:871.2px;width:35.799999999999955px;height:67.4px;border:1px solid #c4c4c4;box-sizing:border-box;background:linear-gradient(#fdfdfd,#f0f0f0 40%,#dcdcdc);"></div>
<svg style="position:absolute;left:544.4000000000001px;top:877.7px;" width="54.5" height="54.6" viewBox="0 0 54.5 54.6"><rect width="54.5" height="54.6" fill="#13b5dc"/><path d="M17.75 16.5 A9.5 9.5 0 0 1 36.75 16.5" fill="none" stroke="#fff" stroke-width="3"/><rect x="10.1" y="16.3" width="34.3" height="29.4" fill="#fff"/><circle cx="18.3" cy="23.3" r="2.8" fill="#13b5dc"/><circle cx="36.2" cy="23.3" r="2.8" fill="#13b5dc"/></svg>
<div style="position:absolute;top:894px;font-family:'Liberation Sans', sans-serif;font-size:23px;line-height:26px;font-weight:400;font-style:normal;color:#111;white-space:pre;transform-origin:0 0;left:603.00px;transform:scaleX(0.9468);"><u>T</u>enders</div>
<svg style="position:absolute;left:690px;top:901px;" width="12" height="9" viewBox="0 0 12 9"><polygon points="0,0.5 11.5,0.5 5.75,8" fill="#7e7e7e"/></svg>
<div style="position:absolute;left:926.4px;top:871.2px;width:185.30000000000007px;height:67.4px;border:1px solid #c4c4c4;box-sizing:border-box;background:linear-gradient(#fdfdfd,#f0f0f0 40%,#dcdcdc);"></div>
<svg style="position:absolute;left:931.6px;top:877.7px;" width="54.5" height="54.6" viewBox="0 0 54.5 54.6"><rect width="54.5" height="54.6" fill="#13b5dc"/><polygon points="8.9,28.3 26.7,10.2 40.1,8.1 46.9,14.8 44.4,28.3 26.3,45.5" fill="#fff"/><circle cx="38.3" cy="16.4" r="3" fill="#13b5dc"/>
<g fill="none" stroke="#13b5dc" stroke-width="1.5"><ellipse cx="26.4" cy="22.8" rx="2.6" ry="2" transform="rotate(-30 26.4 22.8)"/><ellipse cx="26.7" cy="32.9" rx="2.6" ry="2" transform="rotate(-30 26.7 32.9)"/><path d="M19.9 29.2 L33.4 26.8" stroke-width="1.8"/></g></svg>
<div style="position:absolute;top:894px;font-family:'Liberation Sans', sans-serif;font-size:23px;line-height:26px;font-weight:400;font-style:normal;color:#111;white-space:pre;transform-origin:0 0;left:989.47px;transform:scaleX(0.9348);"><u>D</u>iscounts</div>
<svg style="position:absolute;left:1089.6px;top:901px;" width="12" height="9" viewBox="0 0 12 9"><polygon points="0,8 11.7,8 5.85,0.5" fill="#7e7e7e"/></svg>
<div style="position:absolute;left:1126.3px;top:871.2px;width:197.5px;height:67.4px;border:1px solid #c4c4c4;box-sizing:border-box;background:linear-gradient(#fdfdfd,#f0f0f0 40%,#dcdcdc);"></div>
<svg style="position:absolute;left:1131.5px;top:877.7px;" width="54.5" height="54.6" viewBox="0 0 54.5 54.6"><rect width="54.5" height="54.6" fill="#13b5dc"/><rect x="8.6" y="8.1" width="35.8" height="22" rx="2.2" fill="#fff"/><rect x="11.9" y="17" width="6.5" height="4.6" rx="1" fill="#13b5dc"/><rect x="11.6" y="25.2" width="11.1" height="1.6" rx="0.8" fill="#13b5dc"/>
<circle cx="35.8" cy="34.4" r="12.3" fill="#13b5dc"/><circle cx="35.8" cy="34.4" r="9.6" fill="none" stroke="#fff" stroke-width="2"/>
<path d="M28.6 30 V38.5 C28.6 41 43 41 43 38.5 V30 Z" fill="#fff"/><ellipse cx="35.8" cy="30" rx="7.2" ry="3.3" fill="#13b5dc" stroke="#fff" stroke-width="1"/>
<path d="M28.6 34.3 C30 36.5 41.6 36.5 43 34.3 M28.6 37.3 C30 39.5 41.6 39.5 43 37.3" fill="none" stroke="#13b5dc" stroke-width="1"/><text x="35.8" y="32" font-family="Liberation Sans" font-size="5" font-weight="700" fill="#fff" text-anchor="middle">$</text></svg>
<div style="position:absolute;top:894px;font-family:'Liberation Sans', sans-serif;font-size:23px;line-height:26px;font-weight:400;font-style:normal;color:#111;white-space:pre;transform-origin:0 0;left:1189.05px;transform:scaleX(0.9477);">O<u>p</u>erations</div>
<svg style="position:absolute;left:1302px;top:901px;" width="12" height="9" viewBox="0 0 12 9"><polygon points="0,0.5 11.5,0.5 5.75,8" fill="#7e7e7e"/></svg>
<svg style="position:absolute;left:2px;top:958px;" width="23" height="21" viewBox="0 0 23 21"><circle cx="11.2" cy="11.2" r="10" fill="#dedede" stroke="#a4a4a4" stroke-width="1.2"/><path d="M7 9.5 L11.2 13.5 L15.4 9.5" fill="none" stroke="#555" stroke-width="2"/></svg>
<div style="position:absolute;top:958px;font-family:'Liberation Sans', sans-serif;font-size:22.5px;line-height:25px;font-weight:400;font-style:normal;color:#111;white-space:pre;transform-origin:0 0;left:28.96px;transform:scaleX(0.9419);">Keyboard</div>
<div style="position:absolute;left:924.6px;top:514.6px;width:394px;height:354px;background:#fff;border:1px solid #dedede;box-sizing:border-box;"></div>
<div style="position:absolute;left:929px;top:588.7px;width:385px;height:63.5px;background:#e8e8e8"></div>
<svg style="position:absolute;left:932.3px;top:530.4px;" width="39.5" height="40.5" viewBox="0 0 39.5 40.5"><rect width="39.5" height="40.5" fill="#3d52a4"/>
<g fill="none" stroke="#fff" stroke-width="3.6"><ellipse cx="11.2" cy="13.6" rx="3.9" ry="5"/><ellipse cx="28.2" cy="27" rx="3.9" ry="5.1"/></g>
<polygon points="24.4,7 28.2,7 15.2,33.6 11.4,33.6" fill="#fff"/></svg>
<div style="position:absolute;top:541px;font-family:'Liberation Sans', sans-serif;font-size:23px;line-height:26px;font-weight:400;font-style:normal;color:#111;white-space:pre;transform-origin:0 0;left:979.57px;transform:scaleX(0.9310);"><u>S</u>ummary Discount</div>
<div style="position:absolute;top:529px;font-family:'Liberation Sans', sans-serif;font-size:23px;line-height:26px;font-weight:400;font-style:normal;color:#111;white-space:pre;transform-origin:0 0;left:1212.46px;transform:scaleX(0.9411);">Shift/F3</div>
<svg style="position:absolute;left:932.3px;top:600.9px;" width="39.5" height="40.5" viewBox="0 0 39.5 40.5"><rect width="39.5" height="40.5" fill="#3d52a4"/>
<g fill="none" stroke="#fff" stroke-width="3.6"><ellipse cx="11.2" cy="13.6" rx="3.9" ry="5"/><ellipse cx="28.2" cy="27" rx="3.9" ry="5.1"/></g>
<polygon points="24.4,7 28.2,7 15.2,33.6 11.4,33.6" fill="#fff"/></svg>
<div style="position:absolute;top:610px;font-family:'Liberation Sans', sans-serif;font-size:23px;line-height:26px;font-weight:400;font-style:normal;color:#111;white-space:pre;transform-origin:0 0;left:980.50px;transform:scaleX(0.9291);">T<u>r</u>ansaction Discount</div>
<svg style="position:absolute;left:1297.5px;top:616.5px;" width="10" height="11" viewBox="0 0 10 11"><polygon points="0,0.2 9,5.2 0,10.2" fill="#111"/></svg>
<svg style="position:absolute;left:932.3px;top:671.6px;" width="39.5" height="40.5" viewBox="0 0 39.5 40.5"><rect width="39.5" height="40.5" fill="#3d52a4"/>
<g fill="none" stroke="#fff" stroke-width="3.6"><ellipse cx="11.2" cy="13.6" rx="3.9" ry="5"/><ellipse cx="28.2" cy="27" rx="3.9" ry="5.1"/></g>
<polygon points="24.4,7 28.2,7 15.2,33.6 11.4,33.6" fill="#fff"/></svg>
<div style="position:absolute;top:681px;font-family:'Liberation Sans', sans-serif;font-size:23px;line-height:26px;font-weight:400;font-style:normal;color:#111;white-space:pre;transform-origin:0 0;left:980.50px;transform:scaleX(0.9074);">Transaction PriceLe<u>v</u>el</div>
<svg style="position:absolute;left:1297.5px;top:687px;" width="10" height="11" viewBox="0 0 10 11"><polygon points="0,0.2 9,5.2 0,10.2" fill="#111"/></svg>
<svg style="position:absolute;left:932.3px;top:742.2px;" width="39.5" height="40.5" viewBox="0 0 39.5 40.5"><rect width="39.5" height="40.5" fill="#3d52a4"/>
<g fill="none" stroke="#fff" stroke-width="3.6"><ellipse cx="11.2" cy="13.6" rx="3.9" ry="5"/><ellipse cx="28.2" cy="27" rx="3.9" ry="5.1"/></g>
<polygon points="24.4,7 28.2,7 15.2,33.6 11.4,33.6" fill="#fff"/></svg>
<div style="position:absolute;top:751px;font-family:'Liberation Sans', sans-serif;font-size:23px;line-height:26px;font-weight:400;font-style:normal;color:#111;white-space:pre;transform-origin:0 0;left:979.55px;transform:scaleX(0.9472);">Curr<u>e</u>nt Item Discount</div>
<svg style="position:absolute;left:1297.5px;top:757.4px;" width="10" height="11" viewBox="0 0 10 11"><polygon points="0,0.2 9,5.2 0,10.2" fill="#111"/></svg>
<svg style="position:absolute;left:932.3px;top:812.2px;" width="39.5" height="40.5" viewBox="0 0 39.5 40.5"><rect width="39.5" height="40.5" fill="#3d52a4"/>
<g fill="none" stroke="#fff" stroke-width="3.6"><ellipse cx="11.2" cy="13.6" rx="3.9" ry="5"/><ellipse cx="28.2" cy="27" rx="3.9" ry="5.1"/></g>
<polygon points="24.4,7 28.2,7 15.2,33.6 11.4,33.6" fill="#fff"/></svg>
<div style="position:absolute;top:822px;font-family:'Liberation Sans', sans-serif;font-size:23px;line-height:26px;font-weight:400;font-style:normal;color:#111;white-space:pre;transform-origin:0 0;left:980.50px;transform:scaleX(0.9398);">Al<u>l</u> items</div>
<svg style="position:absolute;left:1297.5px;top:827.8px;" width="10" height="11" viewBox="0 0 10 11"><polygon points="0,0.2 9,5.2 0,10.2" fill="#111"/></svg>
<div style="position:absolute;left:571.4px;top:585.3px;width:353px;height:354.5px;background:#fff;border:1px solid #dedede;box-sizing:border-box;"></div>
<svg style="position:absolute;left:578.7px;top:600.9px;" width="39.5" height="40.5" viewBox="0 0 39.5 40.5"><rect width="39.5" height="40.5" fill="#1b79ad"/>
<g fill="none" stroke="#fff" stroke-width="3.6"><ellipse cx="11.2" cy="13.6" rx="3.9" ry="5"/><ellipse cx="28.2" cy="27" rx="3.9" ry="5.1"/></g>
<polygon points="24.4,7 28.2,7 15.2,33.6 11.4,33.6" fill="#fff"/></svg>
<div style="position:absolute;top:612px;font-family:'Liberation Sans', sans-serif;font-size:23px;line-height:26px;font-weight:400;font-style:normal;color:#111;white-space:pre;transform-origin:0 0;left:626.34px;transform:scaleX(0.9586);">Discount <u>f</u>rom Minimum Price</div>
<svg style="position:absolute;left:578.7px;top:671.6px;" width="39.5" height="40.5" viewBox="0 0 39.5 40.5"><rect width="39.5" height="40.5" fill="#1b79ad"/>
<g fill="none" stroke="#fff" stroke-width="3.6"><ellipse cx="11.2" cy="13.6" rx="3.9" ry="5"/><ellipse cx="28.2" cy="27" rx="3.9" ry="5.1"/></g>
<polygon points="24.4,7 28.2,7 15.2,33.6 11.4,33.6" fill="#fff"/></svg>
<div style="position:absolute;top:682px;font-family:'Liberation Sans', sans-serif;font-size:23px;line-height:26px;font-weight:400;font-style:normal;color:#111;white-space:pre;transform-origin:0 0;left:626.36px;transform:scaleX(0.9357);">Discount from Ret<u>a</u>il Price</div>
<svg style="position:absolute;left:578.7px;top:742.2px;" width="39.5" height="40.5" viewBox="0 0 39.5 40.5"><rect width="39.5" height="40.5" fill="#1b79ad"/>
<g fill="none" stroke="#fff" stroke-width="3.6"><ellipse cx="11.2" cy="13.6" rx="3.9" ry="5"/><ellipse cx="28.2" cy="27" rx="3.9" ry="5.1"/></g>
<polygon points="24.4,7 28.2,7 15.2,33.6 11.4,33.6" fill="#fff"/></svg>
<div style="position:absolute;top:752px;font-family:'Liberation Sans', sans-serif;font-size:23px;line-height:26px;font-weight:400;font-style:normal;color:#111;white-space:pre;transform-origin:0 0;left:626.35px;transform:scaleX(0.9502);">Mar<u>k</u>up from Cost</div>
<svg style="position:absolute;left:578.7px;top:812.2px;" width="39.5" height="40.5" viewBox="0 0 39.5 40.5"><rect width="39.5" height="40.5" fill="#1b79ad"/>
<g fill="none" stroke="#fff" stroke-width="3.6"><ellipse cx="11.2" cy="13.6" rx="3.9" ry="5"/><ellipse cx="28.2" cy="27" rx="3.9" ry="5.1"/></g>
<polygon points="24.4,7 28.2,7 15.2,33.6 11.4,33.6" fill="#fff"/></svg>
<div style="position:absolute;top:823px;font-family:'Liberation Sans', sans-serif;font-size:23px;line-height:26px;font-weight:400;font-style:normal;color:#111;white-space:pre;transform-origin:0 0;left:626.33px;transform:scaleX(0.9668);">Set profit mar<u>g</u>in</div>
<svg style="position:absolute;left:578.7px;top:882.8px;" width="39.5" height="40.5" viewBox="0 0 39.5 40.5"><rect width="39.5" height="40.5" fill="#e01f2d"/>
<g fill="none" stroke="#fff" stroke-width="3.6"><ellipse cx="11.2" cy="13.6" rx="3.9" ry="5"/><ellipse cx="28.2" cy="27" rx="3.9" ry="5.1"/></g>
<polygon points="24.4,7 28.2,7 15.2,33.6 11.4,33.6" fill="#fff"/></svg>
<div style="position:absolute;top:893px;font-family:'Liberation Sans', sans-serif;font-size:23px;line-height:26px;font-weight:400;font-style:normal;color:#111;white-space:pre;transform-origin:0 0;left:626.34px;transform:scaleX(0.9648);"><u>N</u>o discount</div>
</body></html>
